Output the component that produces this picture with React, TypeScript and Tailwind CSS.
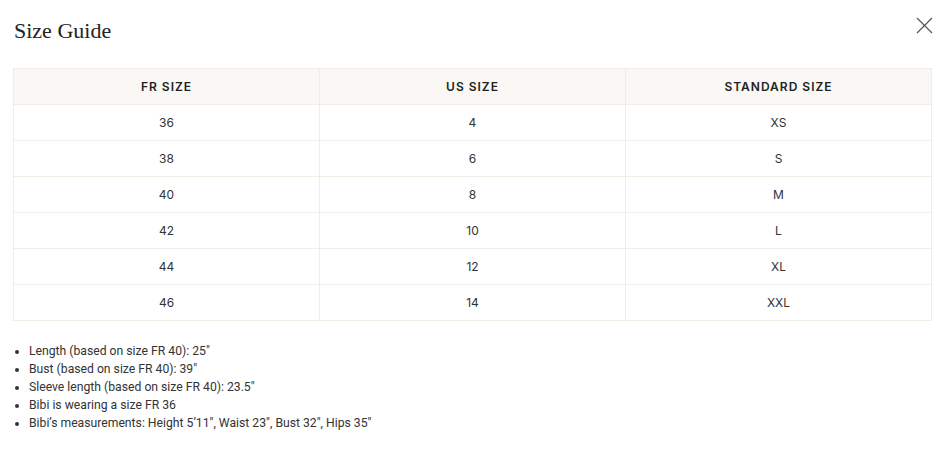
import React from "react";

const rows = [
  ["36", "4", "XS"],
  ["38", "6", "S"],
  ["40", "8", "M"],
  ["42", "10", "L"],
  ["44", "12", "XL"],
  ["46", "14", "XXL"],
];

const notes = [
  "Length (based on size FR 40): 25\"",
  "Bust (based on size FR 40): 39\"",
  "Sleeve length (based on size FR 40): 23.5\"",
  "Bibi is wearing a size FR 36",
  "Bibi’s measurements: Height 5’11\", Waist 23\", Bust 32\", Hips 35\u2033",
];

export default function App() {
  return (
    <div className="w-[950px] h-[470px] bg-white text-[#333] font-['Inter',sans-serif]">
      {/* Header */}
      <div className="flex items-start justify-between pl-[14px] pr-[17px] pt-[17px]">
        <h2 className="font-['Liberation_Serif',serif] text-[22px] leading-[28px] text-[#222]">
          Size Guide
        </h2>
        <button className="mt-[0px] text-[#555]">
          <svg width="17" height="17" viewBox="0 0 17 17" fill="none" stroke="currentColor" strokeWidth="1.2">
            <path d="M1 1L16 16M16 1L1 16" />
          </svg>
        </button>
      </div>

      {/* Table */}
      <table className="mt-[23px] ml-[13px] w-[919px] border-collapse table-fixed text-[12px]">
        <thead>
          <tr className="bg-[#f9f8f4]">
            <th className="h-[36px] border border-[#efede4] font-semibold tracking-[1px] text-[#222]">FR SIZE</th>
            <th className="h-[36px] border border-[#efede4] font-semibold tracking-[1px] text-[#222]">US SIZE</th>
            <th className="h-[36px] border border-[#efede4] font-semibold tracking-[1px] text-[#222]">STANDARD SIZE</th>
          </tr>
        </thead>
        <tbody>
          {rows.map((r) => (
            <tr key={r[0]}>
              {r.map((c, i) => (
                <td key={i} className="h-[36px] border border-[#efede4] text-center text-[#333]">
                  {c}
                </td>
              ))}
            </tr>
          ))}
        </tbody>
      </table>

      {/* Notes */}
      <ul className="mt-[21px] pl-[29px] list-disc font-['Roboto',sans-serif] text-[12.2px] leading-[18px] text-[#333]">
        {notes.map((n) => (
          <li key={n}>{n}</li>
        ))}
      </ul>
    </div>
  );
}
